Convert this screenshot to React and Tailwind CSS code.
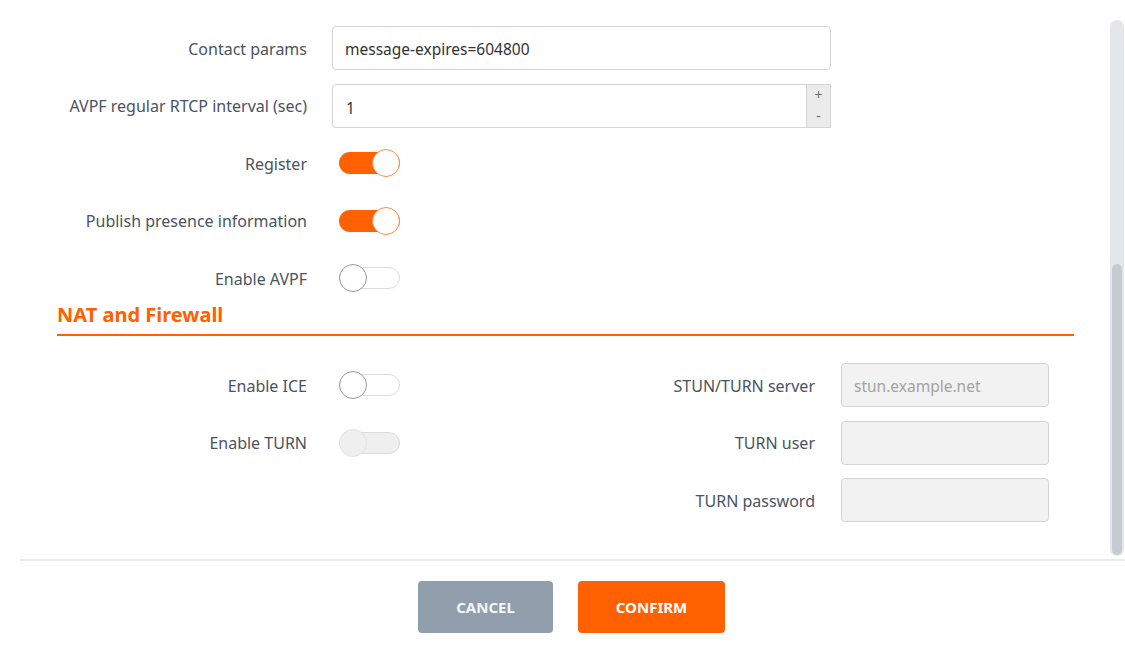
import React from "react";

const font = { fontFamily: '"Noto Sans", "Open Sans", sans-serif' };

function Toggle({ on, disabled }) {
  if (on) {
    return (
      <div className="relative ml-[7px] h-[22px] w-[61px] rounded-full bg-[#ff6000]">
        <div className="absolute right-0 top-[-3px] h-[28px] w-[28px] rounded-full border-[1.5px] border-[#ff8a4a] bg-white" />
      </div>
    );
  }
  return (
    <div
      className={
        "relative ml-[7px] h-[22px] w-[61px] rounded-full border border-[#dcdcdc] " +
        (disabled ? "bg-[#efefef]" : "bg-white")
      }
    >
      <div
        className={
          "absolute left-[-1px] top-[-4px] h-[28px] w-[28px] rounded-full border-[1.5px] " +
          (disabled ? "border-[#e2e2e2] bg-[#efefef]" : "border-[#9a9a9a] bg-white")
        }
      />
    </div>
  );
}

const labelL = "w-[275px] shrink-0 pr-[25px] pt-[1px] text-right text-[16px] text-[#4a5361]";
const labelR = "w-[276px] shrink-0 pr-[26px] pt-[1px] text-right text-[16px] text-[#4a5361]";

export default function App() {
  return (
    <div className="h-[668px] w-[1125px] overflow-hidden bg-white" style={font}>
      <div className="flex h-[668px] flex-col pl-[20px]">
        <div className="flex h-[559px] shrink-0">
          <div className="flex-1 pl-[37px] pr-[36px] pt-[26px]">
            <div className="flex flex-col gap-[13.5px]">
              <div className="flex h-[44px] items-center">
                <div className={labelL}>Contact params</div>
                <div className="flex h-[44px] w-[499px] items-center rounded-[4px] border border-[#d4d4d4] px-[12px] pt-[4px] text-[15.5px] text-[#333]">
                  message-expires=604800
                </div>
              </div>
              <div className="flex h-[44px] items-center">
                <div className={labelL}>AVPF regular RTCP interval (sec)</div>
                <div className="flex h-[44px] w-[499px] items-stretch rounded-l-[4px] border border-[#d4d4d4] text-[15.5px] text-[#333]">
                  <div className="flex flex-1 items-center px-[13px] pt-[6px]">1</div>
                  <div className="flex w-[24px] flex-col items-center justify-around border-l border-[#d4d4d4] bg-[#ebebeb] text-[14px] leading-none text-[#6b6b6b]">
                    <span>+</span>
                    <span>-</span>
                  </div>
                </div>
              </div>
              <div className="flex h-[44px] items-center">
                <div className={labelL}>Register</div>
                <Toggle on />
              </div>
              <div className="flex h-[44px] items-center">
                <div className={labelL}>Publish presence information</div>
                <Toggle on />
              </div>
              <div className="flex h-[44px] items-center">
                <div className={labelL}>Enable AVPF</div>
                <Toggle />
              </div>
            </div>

            <div className="mt-[1px] border-b-2 border-[#ff6000] pb-[7px] pt-[2px] text-[20px] font-bold leading-[24px] text-[#ff6000]">
              NAT and Firewall
            </div>

            <div className="mt-[27px] flex">
              <div className="flex w-[508px] flex-col gap-[13.5px]">
                <div className="flex h-[44px] items-center">
                  <div className={labelL}>Enable ICE</div>
                  <Toggle />
                </div>
                <div className="flex h-[44px] items-center">
                  <div className={labelL}>Enable TURN</div>
                  <Toggle disabled />
                </div>
              </div>
              <div className="flex flex-col gap-[13.5px]">
                <div className="flex h-[44px] items-center">
                  <div className={labelR}>STUN/TURN server</div>
                  <div className="flex h-[44px] w-[208px] items-center rounded-[4px] border border-[#d4d4d4] bg-[#f2f2f2] px-[12px] pt-[3px] text-[15.5px] text-[#a3a3a3]">
                    stun.example.net
                  </div>
                </div>
                <div className="flex h-[44px] items-center">
                  <div className={labelR}>TURN user</div>
                  <div className="h-[44px] w-[208px] rounded-[4px] border border-[#d4d4d4] bg-[#f2f2f2]" />
                </div>
                <div className="flex h-[44px] items-center">
                  <div className={labelR}>TURN password</div>
                  <div className="h-[44px] w-[208px] rounded-[4px] border border-[#d4d4d4] bg-[#f2f2f2]" />
                </div>
              </div>
            </div>
          </div>
          <div className="mr-[1px] mt-[20px] mb-[3px] flex w-[14px] flex-col justify-end rounded-full bg-[#e3e6ea] px-[2px] pb-[1px]">
            <div className="h-[291px] rounded-full bg-[#c6cbd3]" />
          </div>
        </div>
        <div className="h-[2px] bg-[#ebebeb]" />
        <div className="flex justify-center gap-[25px] pr-[2px] pt-[20px]">
          <button className="h-[52px] w-[135px] rounded-[4px] bg-[#919fac] text-[15px] font-bold text-[#f4f6f8]">CANCEL</button>
          <button className="h-[52px] w-[147px] rounded-[4px] bg-[#ff6000] text-[15px] font-bold text-white">CONFIRM</button>
        </div>
      </div>
    </div>
  );
}
